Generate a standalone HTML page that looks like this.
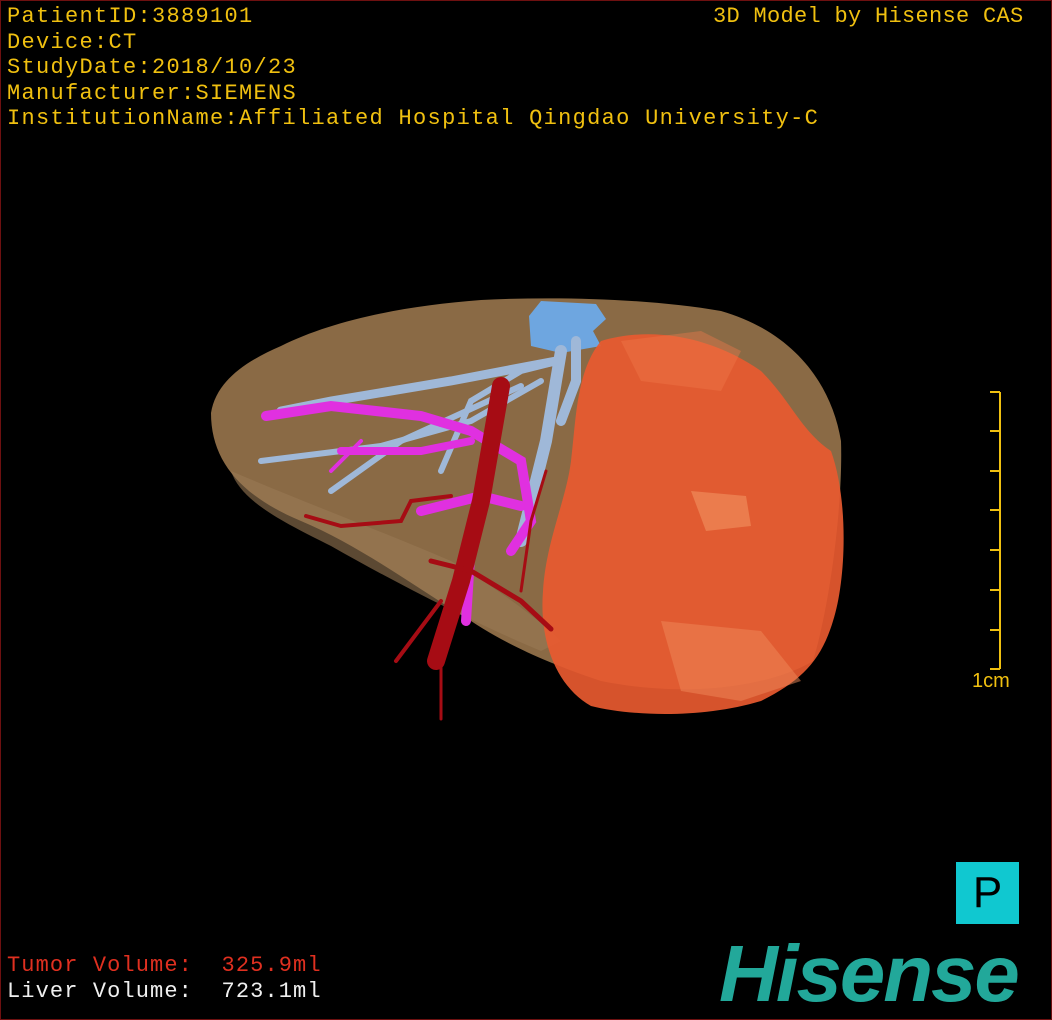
<!DOCTYPE html>
<html><head><meta charset="utf-8"><style>
html,body{margin:0;padding:0;background:#000;}
#v{position:relative;width:1050px;height:1018px;border:1px solid #6e1010;background:#000;overflow:hidden;font-family:"Liberation Mono","Noto Sans CJK SC",monospace;}
.info{position:absolute;left:6px;top:3px;color:#f0c010;font-size:22px;line-height:25.5px;letter-spacing:1.3px;white-space:pre;}
.tr{position:absolute;left:712px;top:3px;color:#f0c010;font-size:22px;letter-spacing:0.3px;white-space:pre;}
.vol{position:absolute;left:6px;top:952px;font-size:22px;line-height:26px;letter-spacing:1.1px;white-space:pre;}
.p{position:absolute;left:955px;top:861px;width:63px;height:62px;background:#10c8d0;color:#000;font-family:"Liberation Sans",sans-serif;font-size:44px;line-height:62px;text-align:center;}
.logo{position:absolute;left:718px;top:933px;color:#22a89a;font-family:"Liberation Sans",sans-serif;font-size:80px;font-weight:bold;font-style:italic;letter-spacing:-2px;line-height:80px;transform:scaleX(1.02);transform-origin:left;}
.cm{position:absolute;left:971px;top:669px;color:#f0c010;font-family:"Liberation Sans",sans-serif;font-size:20px;}
</style></head><body><div id="v">
<svg width="1050" height="1018" style="position:absolute;left:0;top:0">
<path d="M210,412 C215,380 245,360 280,345 C330,320 400,305 480,299 C560,295 650,298 720,310 C790,330 830,380 840,440 C842,500 830,600 812,660 C780,680 700,700 600,680 C540,660 500,640 470,620 C420,590 360,545 300,520 C240,495 210,460 210,412Z" fill="#8a6a45"/>
<path d="M230,470 C300,500 380,530 450,560 C500,590 540,620 560,640 L540,650 C480,625 400,585 330,545 C280,520 240,500 230,470Z" fill="#9a7a55" opacity="0.6"/>
<path d="M540,300 L595,303 L605,318 L592,330 L600,345 L560,352 L530,345 L528,315Z" fill="#6ea6e0"/>
<g stroke="#9fb8d8" stroke-linecap="round" fill="none">
<path d="M560,350 L545,440 L520,540" stroke-width="12"/>
<path d="M555,360 L450,380 L330,400 L280,410" stroke-width="9"/>
<path d="M520,385 L400,440 L330,490" stroke-width="6"/>
<path d="M540,380 L470,420 L380,445 L260,460" stroke-width="6"/>
<path d="M560,360 L520,370 L470,400 L440,470" stroke-width="6"/>
<path d="M575,340 L575,380 L560,420" stroke-width="10"/>
</g>
<g stroke="#e030e0" stroke-linecap="round" fill="none">
<path d="M265,415 L330,405 L420,415 L470,430 L520,460 L530,520 L510,550" stroke-width="10"/>
<path d="M340,450 L420,450 L470,440" stroke-width="8"/>
<path d="M420,510 L480,495 L520,505" stroke-width="10"/>
<path d="M470,540 L465,620" stroke-width="10"/>
<path d="M330,470 L360,440" stroke-width="4"/>
</g>
<path d="M600,340 C650,325 710,335 760,370 C790,400 800,430 830,450 C848,500 845,580 832,620 C820,660 800,680 760,700 C700,718 630,715 590,705 C555,685 538,640 542,590 C545,540 565,500 570,460 C575,420 575,370 600,340Z" fill="#e85a30" opacity="0.92"/>
<path d="M690,490 L745,495 L750,525 L705,530Z" fill="#f08a5a" opacity="0.7"/>
<path d="M660,620 L760,630 L800,680 L740,700 L680,690Z" fill="#f08a5a" opacity="0.5"/>
<path d="M620,340 L700,330 L740,350 L720,390 L640,380Z" fill="#f07a4a" opacity="0.4"/>
<g stroke="#a60c14" stroke-linecap="round" fill="none">
<path d="M500,385 L480,500 L460,580 L435,660" stroke-width="18"/>
<path d="M305,515 L340,525 L400,520 L410,500 L450,495" stroke-width="4"/>
<path d="M430,560 L470,570 L520,600 L550,628" stroke-width="5"/>
<path d="M440,600 L395,660" stroke-width="4"/>
<path d="M440,650 L440,718" stroke-width="3"/>
<path d="M520,590 L530,520 L545,470" stroke-width="3"/>
</g>
<path d="M999,391 L999,668 M989,391 H999 M989,430 H999 M989,470 H999 M989,509 H999 M989,549 H999 M989,589 H999 M989,629 H999 M989,668 H999" stroke="#f0c010" stroke-width="2" fill="none"/>
</svg>
<div class="info">PatientID:3889101
Device:CT
StudyDate:2018/10/23
Manufacturer:SIEMENS
InstitutionName:Affiliated Hospital Qingdao University-C</div>
<div class="tr">3D Model by Hisense CAS</div>
<div class="cm">1cm</div>
<div class="vol"><span style="color:#e03020">Tumor Volume:  325.9ml</span>
<span style="color:#f0f0f0">Liver Volume:  723.1ml</span></div>
<div class="p">P</div>
<div class="logo">Hisense</div>
</div></body></html>
